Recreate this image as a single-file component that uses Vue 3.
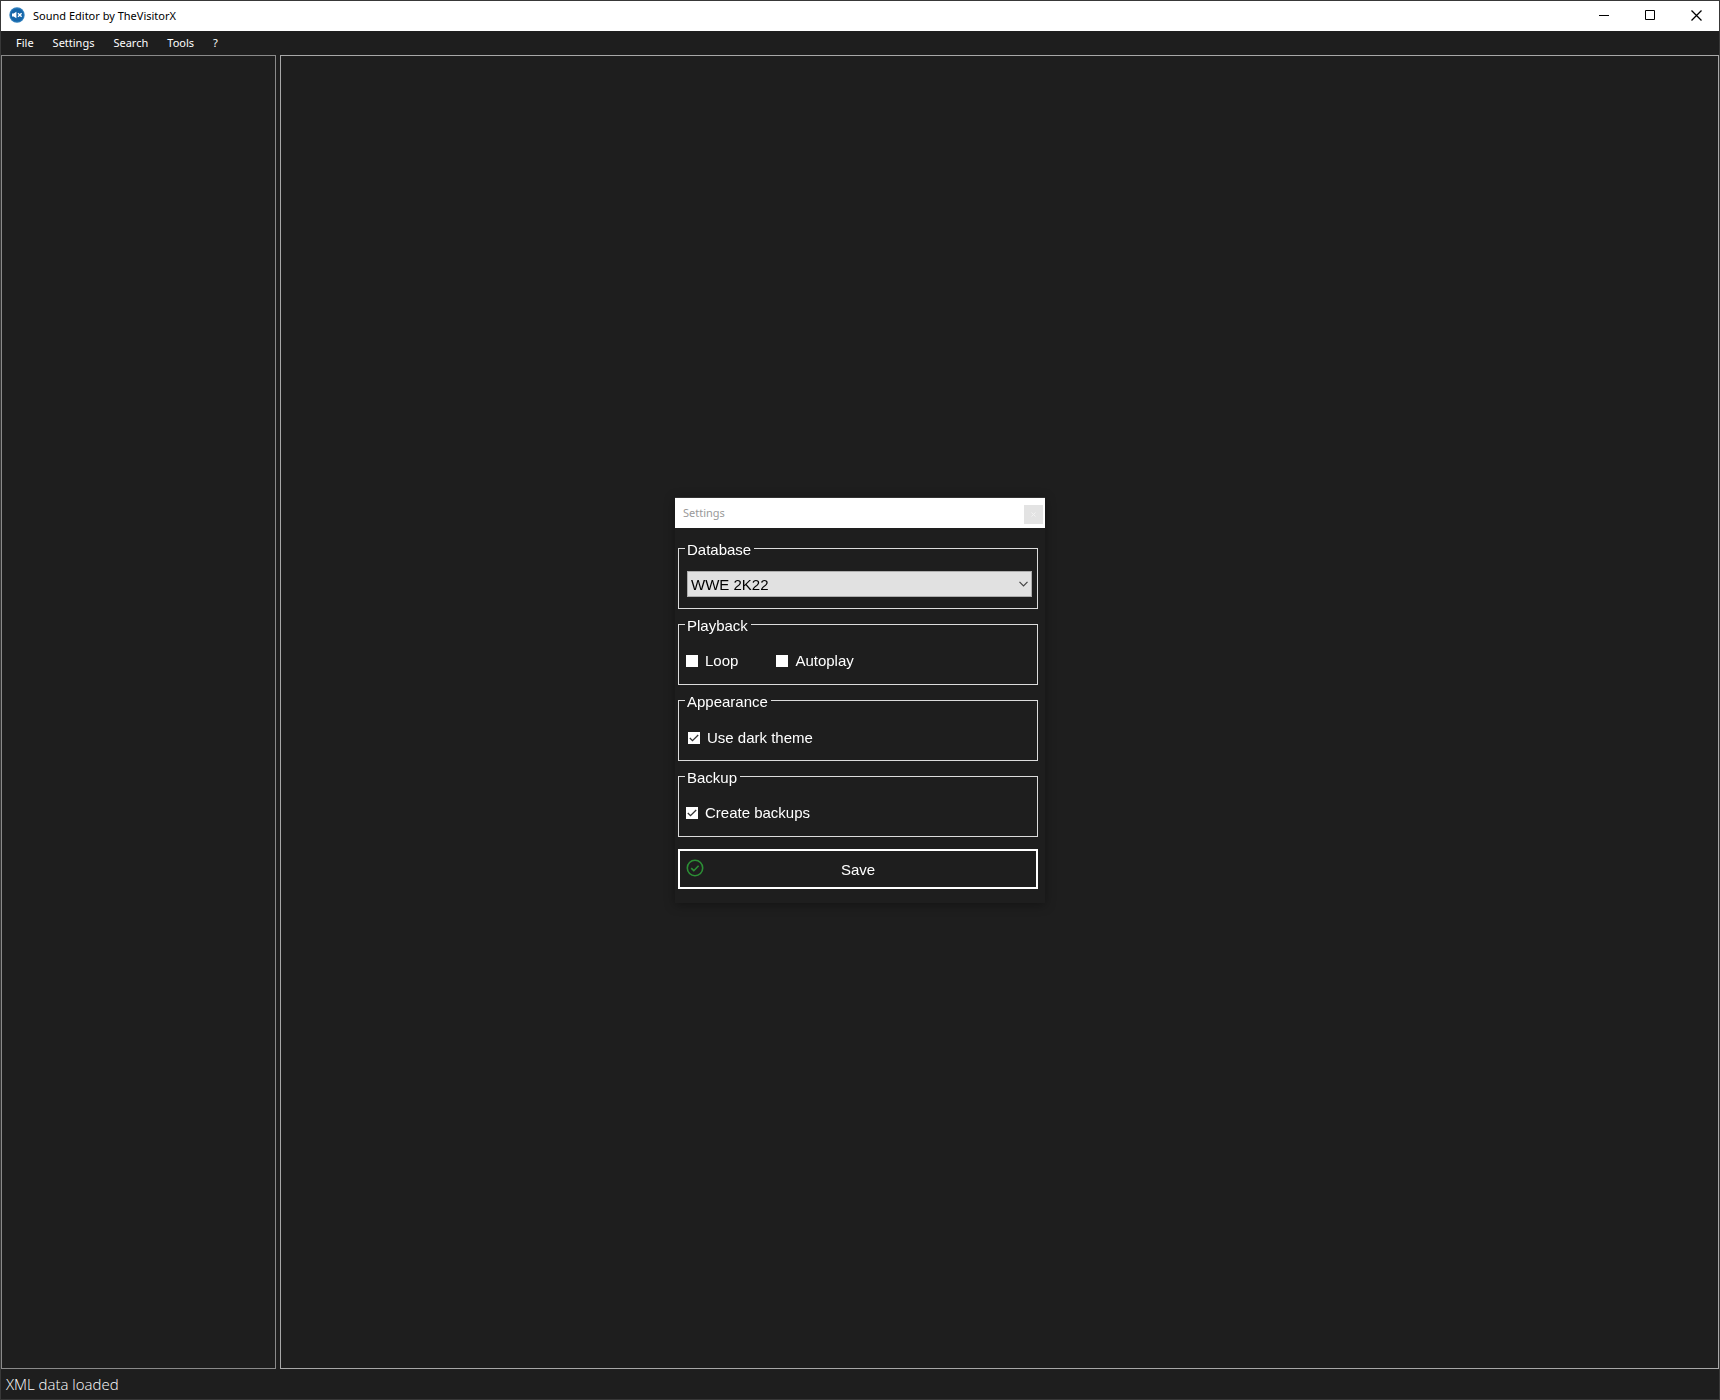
<template>
  <div class="window">
    <header class="title-bar">
      <svg class="app-icon" viewBox="0 0 16 16" aria-hidden="true">
        <circle cx="8" cy="8" r="7.7" fill="#2f7fbd" />
        <circle cx="8" cy="8" r="6.6" fill="#1565a8" />
        <path d="M3 6.6h1.6L7.4 4.8v6.4L4.6 9.4H3z" fill="#fff" />
        <path d="M9 6.2l3.6 3.6M12.6 6.2L9 9.8" stroke="#fff" stroke-width="1.4" />
      </svg>
      <h1 class="title">Sound Editor by TheVisitorX</h1>
      <button class="window-button" type="button" aria-label="Minimize">
        <svg viewBox="0 0 11 11"><path d="M0 5.5h10" /></svg>
      </button>
      <button class="window-button" type="button" aria-label="Maximize">
        <svg viewBox="0 0 11 11"><path d="M.5.5h9v9h-9z" /></svg>
      </button>
      <button class="window-button" type="button" aria-label="Close">
        <svg class="cross" viewBox="0 0 11 11"><path d="M.5.5l10 10M10.5.5l-10 10" /></svg>
      </button>
    </header>

    <nav class="menu-bar">
      <button v-for="item in menuItems" :key="item" class="menu-item" type="button">{{ item }}</button>
    </nav>

    <main class="panels">
      <section class="panel tree-panel"></section>
      <section class="panel content-panel"></section>
    </main>

    <footer class="status-bar">XML data loaded</footer>

    <div class="overlay">
      <form class="dialog" role="dialog" aria-labelledby="dialog-title" @submit.prevent>
        <div class="dialog-title-bar">
          <h2 id="dialog-title" class="dialog-title">Settings</h2>
          <button class="dialog-close" type="button" aria-label="Close settings">
            <svg viewBox="0 0 5 5"><path d="M.5.5l4 4M4.5.5l-4 4" /></svg>
          </button>
        </div>

        <div class="dialog-body">
          <fieldset class="group">
            <legend>Database</legend>
            <div class="select-box">
              <select v-model="database" aria-label="Database">
                <option>WWE 2K22</option>
              </select>
              <svg class="arrow" viewBox="0 0 9 6" aria-hidden="true"><path d="M.5.8l4 4 4-4" /></svg>
            </div>
          </fieldset>

          <fieldset class="group">
            <legend>Playback</legend>
            <div class="options">
              <label class="check"><input v-model="loop" type="checkbox" />Loop</label>
              <label class="check"><input v-model="autoplay" type="checkbox" />Autoplay</label>
            </div>
          </fieldset>

          <fieldset class="group">
            <legend>Appearance</legend>
            <div class="options indented">
              <label class="check"><input v-model="darkTheme" type="checkbox" />Use dark theme</label>
            </div>
          </fieldset>

          <fieldset class="group">
            <legend>Backup</legend>
            <div class="options">
              <label class="check"><input v-model="createBackups" type="checkbox" />Create backups</label>
            </div>
          </fieldset>

          <button class="save" type="submit">
            <svg viewBox="0 0 18 18" aria-hidden="true">
              <circle cx="9" cy="9" r="7.7" />
              <path d="M5.2 9.2l2.6 2.5 4.8-5" />
            </svg>
            <span>Save</span>
          </button>
        </div>
      </form>
    </div>
  </div>
</template>

<script setup>
import { ref } from 'vue';

const menuItems = ['File', 'Settings', 'Search', 'Tools', '?'];

const database = ref('WWE 2K22');
const loop = ref(false);
const autoplay = ref(false);
const darkTheme = ref(true);
const createBackups = ref(true);
</script>

<style>
body {
  background: #1e1e1e;
}
</style>

<style scoped>
* {
  box-sizing: border-box;
}
button {
  padding: 0;
  border: 0;
  background: none;
  color: inherit;
  font: inherit;
}
.window {
  display: flex;
  flex-direction: column;
  min-height: 100vh;
  border: 1px solid #383838;
  background: #1e1e1e;
  color: #fff;
  font-family: "Noto Sans", "Open Sans", sans-serif;
  font-size: 11px;
}
.title-bar {
  display: flex;
  align-items: center;
  height: 30px;
  padding: 0 0 2px 8px;
  background: #fff;
  color: #000;
}
.app-icon {
  width: 16px;
  height: 16px;
}
.title {
  flex: 1;
  margin: 0 0 0 8px;
  font-size: 11px;
  font-weight: 400;
}
.window-button {
  display: grid;
  place-items: center;
  width: 46px;
  height: 28px;
}
.window-button svg {
  width: 11px;
  height: 11px;
  fill: none;
  stroke: #000;
}
.window-button .cross {
  stroke-width: 1.3;
}
.window-button:hover {
  background: #e5e5e5;
}
.menu-bar {
  display: flex;
  gap: 19px;
  height: 24px;
  padding: 0 0 2px 15px;
}
.panels {
  display: flex;
  flex: 1;
  gap: 4px;
}
.panel {
  border: 1px solid #8a8a8a;
}
.tree-panel {
  width: 275px;
}
.content-panel {
  flex: 1;
  border-color: #a8a8a8;
}
.status-bar {
  height: 30px;
  padding-left: 5px;
  font-family: "Open Sans", "Noto Sans", sans-serif;
  font-size: 15px;
  font-weight: 300;
  line-height: 30px;
}

/* Settings dialog */
.overlay {
  position: fixed;
  inset: 0;
  display: grid;
  place-items: center;
}
.dialog {
  width: 370px;
  border-top: 1px solid #333;
  background: #1e1e1e;
  box-shadow: 0 2px 10px rgba(0, 0, 0, 0.35);
  font-family: "Liberation Sans", Arial, sans-serif;
  font-size: 15px;
}
.dialog-title-bar {
  display: flex;
  align-items: center;
  justify-content: space-between;
  height: 30px;
  padding: 0 2px 0 8px;
  background: #fff;
}
.dialog-title {
  margin: 0 0 2px;
  color: #999;
  font-family: "Noto Sans", "Open Sans", sans-serif;
  font-size: 11px;
  font-weight: 400;
}
.dialog-close {
  display: grid;
  place-items: center;
  width: 19px;
  height: 19px;
  margin-top: 3px;
  background: #e3e3e3;
}
.dialog-close svg {
  width: 5px;
  height: 5px;
  stroke: #f2f2f2;
}
.dialog-body {
  padding: 10px 7px 14px 3px;
}
.group {
  height: 71px;
  min-width: 0;
  margin: 0 0 5px;
  padding: 0 5px 0 6px;
  border: 1px solid #dcdcdc;
}
.group legend {
  height: 20px;
  padding: 4px 3px 0 2px;
  line-height: 16px;
}
.select-box {
  display: grid;
  align-items: center;
  margin: 13px 0 0 2px;
}
.select-box select,
.arrow {
  grid-area: 1 / 1;
}
.select-box select {
  width: 100%;
  height: 26px;
  padding: 0 20px 0 3px;
  appearance: none;
  border: 1px solid #adadad;
  border-radius: 0;
  background: #e1e1e1;
  color: #000;
  font: inherit;
}
.arrow {
  justify-self: end;
  width: 9px;
  height: 6px;
  margin-right: 4px;
  fill: none;
  stroke: #444;
  stroke-width: 1.2;
  pointer-events: none;
}
.options {
  display: flex;
  gap: 38px;
  padding: 17px 0 0 1px;
}
.options.indented {
  padding: 18px 0 0 3px;
}
.check {
  display: flex;
  align-items: center;
  gap: 7px;
  line-height: 20px;
}
.check input {
  width: 12px;
  height: 12px;
  margin: 0;
  appearance: none;
  background: #fff;
}
.check input:checked {
  background: #fff url("data:image/svg+xml,%3Csvg xmlns='http://www.w3.org/2000/svg' viewBox='0 0 12 12'%3E%3Cpath d='M1.8 6l2.7 2.7 5.7-5.7' fill='none' stroke='%23333' stroke-width='1.3'/%3E%3C/svg%3E");
}
.save {
  display: grid;
  grid-template-columns: 1fr auto 1fr;
  align-items: center;
  width: 100%;
  height: 40px;
  margin-top: 12px;
  padding: 0 6px;
  border: 2px solid #fff;
}
.save svg {
  width: 18px;
  height: 18px;
  margin-bottom: 2px;
  fill: none;
  stroke: #2c8f35;
  stroke-width: 1.6;
}
</style>
